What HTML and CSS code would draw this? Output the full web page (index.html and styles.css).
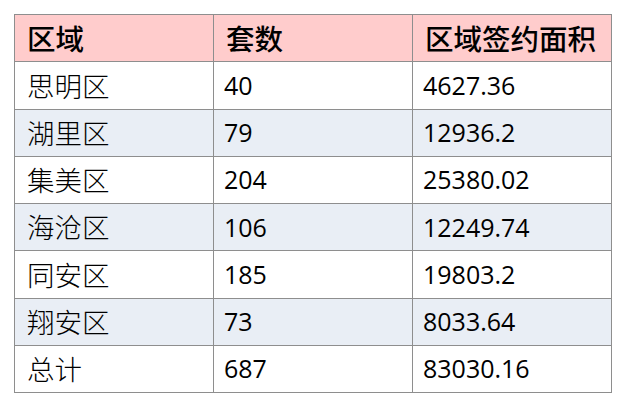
FILE: index.html
```html
<!DOCTYPE html>
<html lang="zh-CN">
<head>
<meta charset="utf-8">
<title>区域签约面积</title>
<link rel="stylesheet" href="styles.css">
</head>
<body>
<div class="page">
<table class="data">
  <thead>
    <tr class="head"><th>区域</th><th>套数</th><th>区域签约面积</th></tr>
  </thead>
  <tbody>
    <tr><td class="zh">思明区</td><td class="num">40</td><td class="num">4627.36</td></tr>
    <tr class="alt"><td class="zh">湖里区</td><td class="num">79</td><td class="num">12936.2</td></tr>
    <tr><td class="zh">集美区</td><td class="num">204</td><td class="num">25380.02</td></tr>
    <tr class="alt"><td class="zh">海沧区</td><td class="num">106</td><td class="num">12249.74</td></tr>
    <tr><td class="zh">同安区</td><td class="num">185</td><td class="num">19803.2</td></tr>
    <tr class="alt"><td class="zh">翔安区</td><td class="num">73</td><td class="num">8033.64</td></tr>
    <tr><td class="zh">总计</td><td class="num">687</td><td class="num">83030.16</td></tr>
  </tbody>
</table>
</div>
</body>
</html>
```
FILE: styles.css
```css
html, body {
  margin: 0;
  padding: 0;
  background: #ffffff;
}
.page {
  padding: 14px 0 0 14px;
}
.data {
  border-collapse: collapse;
  table-layout: fixed;
  width: 598px;
  color: #000000;
}
.data th, .data td {
  border: 1px solid #8e8e8e;
  height: 47.25px;
  box-sizing: border-box;
  padding: 0 0 0 10px;
  text-align: left;
  vertical-align: middle;
  white-space: nowrap;
  overflow: hidden;
}
.head th {
  background: #ffcccc;
  font-family: "Noto Sans CJK SC", sans-serif;
  font-size: 28.5px;
  font-weight: 500;
  line-height: 1;
  padding-left: 12px;
}
.data td {
  background: #ffffff;
}
.data tr.alt td {
  background: #e9eef5;
}
.zh {
  font-family: "Noto Sans CJK SC", sans-serif;
  font-size: 27.5px;
  font-weight: 300;
  line-height: 1;
  padding-left: 12px !important;
}
.num {
  font-family: "Open Sans", "Liberation Sans", sans-serif;
  font-size: 25px;
  line-height: 1;
}
```
